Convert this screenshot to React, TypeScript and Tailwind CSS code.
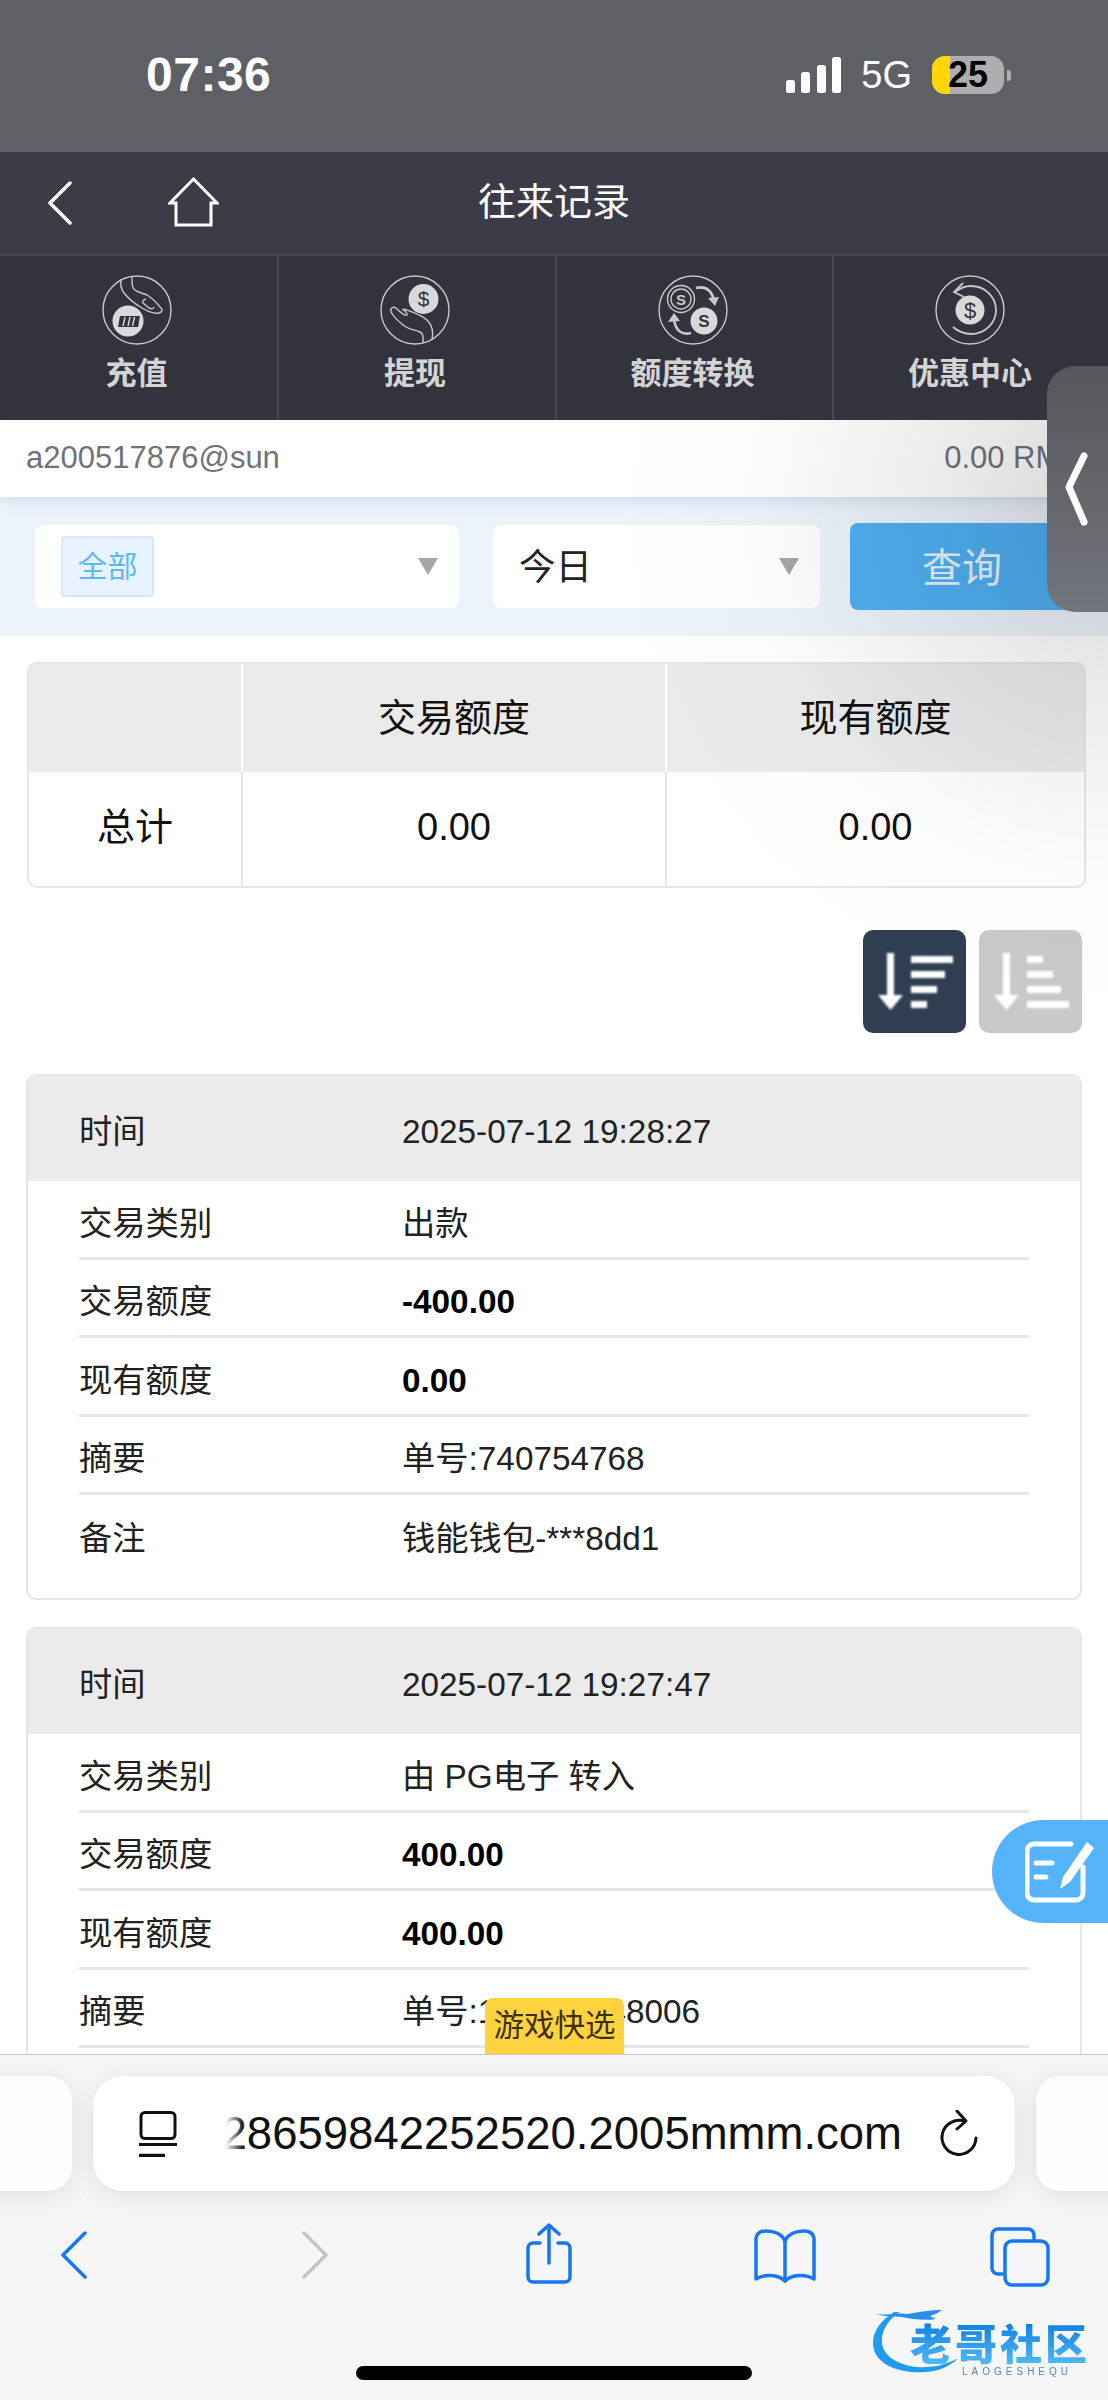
import React from "react";

const FONT = "font-['Liberation_Sans','Noto_Sans_CJK_SC',sans-serif]";

const HandDownIcon = () => (
  <svg viewBox="0 0 70 70" className="w-[70px] h-[70px]" fill="none" stroke="#c9c9c9" strokeWidth="1.4">
    <circle cx="35" cy="35" r="34" />
    <path d="M19 4c-1 6 0 10 3 14 5 6 11 11 18 15 5 3 12 6 17 5 3-1 4-3 2-5-4-5-9-10-14-13-4-2-9-2-12-5-3-2-3-6-3-13" />
    <path d="M44 24c-3 1-4 2-3 4l6 5c2 1 5 1 5-1" />
    <circle cx="26" cy="46" r="15.500" fill="#d9d9d9" stroke="none" />
    <path d="M18 41h20l-2 11H16z" fill="#33333d" stroke="none" />
    <path d="M23 42l-2 9M28 42l-2 9M32.500 42l-2 9" stroke="#d9d9d9" strokeWidth="1.4" />
  </svg>
);

const HandUpIcon = () => (
  <svg viewBox="0 0 70 70" className="w-[70px] h-[70px]" fill="none" stroke="#c9c9c9" strokeWidth="1.4">
    <circle cx="35" cy="35" r="34" />
    <circle cx="43.500" cy="24" r="15" fill="#d9d9d9" stroke="none" />
    <text x="43.500" y="31" textAnchor="middle" fontSize="21" fill="#33333d" stroke="none" fontFamily="Liberation Sans">$</text>
    <path d="M43 68c0-5 1-9-3-11-4-2-9-2-14-5-6-4-12-10-15-15-1-4 2-6 5-4 3 3 6 6 9 7 4 1 2-3-3-6" />
    <path d="M24 34c8 3 16 5 23 11 5 5 7 11 5 20" />
  </svg>
);

const ExchangeIcon = () => (
  <svg viewBox="0 0 70 70" className="w-[70px] h-[70px]" fill="none" stroke="#c9c9c9" strokeWidth="1.4">
    <circle cx="35" cy="35" r="34" />
    <circle cx="23" cy="24" r="13.500" />
    <circle cx="23" cy="24" r="10" />
    <text x="23" y="29.500" textAnchor="middle" fontSize="15" fontWeight="700" fill="#c9c9c9" stroke="none" fontFamily="Liberation Sans">S</text>
    <circle cx="46" cy="46" r="13.500" fill="#d9d9d9" stroke="none" />
    <text x="46" y="52" textAnchor="middle" fontSize="17" fontWeight="700" fill="#33333d" stroke="none" fontFamily="Liberation Sans">S</text>
    <path d="M38 13c8-2 15 1 18 12" strokeWidth="2.600" />
    <path d="M50 23l7 8 4-9z" fill="#c9c9c9" stroke="none" />
    <path d="M33 58c-8 2-15-1-17-13" strokeWidth="2.600" />
    <path d="M10 47l6-9 6 8z" fill="#c9c9c9" stroke="none" />
  </svg>
);

const RebateIcon = () => (
  <svg viewBox="0 0 70 70" className="w-[70px] h-[70px]" fill="none" stroke="#c9c9c9" strokeWidth="1.4">
    <circle cx="35" cy="35" r="34" />
    <circle cx="35" cy="35" r="14.500" fill="#d9d9d9" stroke="none" />
    <text x="35" y="43" textAnchor="middle" fontSize="22" fill="#33333d" stroke="none" fontFamily="Liberation Sans">$</text>
    <path d="M20 17c5-4 10-6 16-6 14 0 25 11 25 24S50 59 36 59c-7 0-12-2-18-7" strokeWidth="1.800" />
    <path d="M28 8l-9 9 10 5" strokeWidth="1.800" />
  </svg>
);

const navItems = [
  { label: "充值", icon: <HandDownIcon /> },
  { label: "提现", icon: <HandUpIcon /> },
  { label: "额度转换", icon: <ExchangeIcon /> },
  { label: "优惠中心", icon: <RebateIcon /> },
];

const records = [
  {
    time: "2025-07-12 19:28:27",
    rows: [
      { label: "交易类别", value: "出款" },
      { label: "交易额度", value: "-400.00", bold: true },
      { label: "现有额度", value: "0.00", bold: true },
      { label: "摘要", value: "单号:740754768" },
      { label: "备注", value: "钱能钱包-***8dd1" },
    ],
  },
  {
    time: "2025-07-12 19:27:47",
    rows: [
      { label: "交易类别", value: "由 PG电子 转入" },
      { label: "交易额度", value: "400.00", bold: true },
      { label: "现有额度", value: "400.00", bold: true },
      { label: "摘要", value: "单号:175228648006" },
      { label: "备注", value: "" },
    ],
  },
];

function SortIcon({ bars }: { bars: number[] }) {
  return (
    <svg viewBox="0 0 103 103" className="w-full h-full blur-[0.8px]" fill="#fff">
      <rect x="24" y="23" width="7" height="46" />
      <path d="M15 65h25l-12.500 15z" />
      {bars.map((w, i) => (
        <rect key={i} x="48" y={26 + i * 15} width={w} height="7" />
      ))}
    </svg>
  );
}

function RecordCard({ record }: { record: (typeof records)[number] }) {
  return (
    <div className="rounded-[10px] border-2 border-[#e6e6e6] overflow-hidden bg-white shrink-0 h-[526px]">
      <div className="h-[105px] bg-[#ebebeb] flex items-center pl-[51px] pt-[6px] text-[33.300px] text-[#222]">
        <span className="w-[323px]">时间</span>
        <span>{record.time}</span>
      </div>
      <div className="px-[51px]">
        {record.rows.map((row, i) => (
          <div
            key={row.label}
            className={`h-[78.500px] flex items-center pt-[10px] text-[33.300px] text-[#222] ${i < record.rows.length - 1 ? "border-b-[3px] border-[#e6e6e6]" : ""}`}
          >
            <span className="w-[323px] shrink-0">{row.label}</span>
            <span className={row.bold ? "font-bold text-black" : ""}>{row.value}</span>
          </div>
        ))}
      </div>
    </div>
  );
}

export default function App() {
  return (
    <div className={`relative w-[1108px] h-[2400px] overflow-hidden bg-white flex flex-col ${FONT}`}>
      {/* status bar */}
      <div className="h-[152px] shrink-0 bg-[#5f6065] flex items-center justify-between pl-[146px] pr-[97px] pb-[2px] text-white">
        <span className="text-[48px] font-bold tracking-[0.5px]">07:36</span>
        <div className="flex items-center">
          <svg width="56" height="36" viewBox="0 0 56 36" fill="#fff">
            <rect x="0" y="23" width="9" height="13" rx="2.500" />
            <rect x="15" y="15" width="9" height="21" rx="2.500" />
            <rect x="31" y="8" width="9" height="28" rx="2.500" />
            <rect x="46" y="0" width="9" height="36" rx="2.500" />
          </svg>
          <span className="text-[38px] ml-[19px] leading-none">5G</span>
          <div className="relative ml-[20px] w-[72px] h-[38px] rounded-[13px] overflow-hidden bg-[#aeaeae] flex items-center justify-center">
            <div className="absolute left-0 top-0 bottom-0 w-[18px] bg-[#ffd60a]" />
            <span className="relative text-black text-[36px] font-bold leading-none">25</span>
          </div>
          <div className="ml-[3px] w-[4px] h-[11px] rounded-r-[3px] bg-[#aeaeae]" />
        </div>
      </div>

      {/* page header */}
      <div className="h-[104px] shrink-0 bg-[#3c3c48] border-b-2 border-[#484855] grid grid-cols-[1fr_auto_1fr] items-center">
        <div className="flex items-center pl-[47px]">
          <svg width="26" height="44" viewBox="0 0 26 44" fill="none" stroke="#fff" strokeWidth="3.500" strokeLinecap="round" strokeLinejoin="round">
            <path d="M23 2 3 22l20 20" />
          </svg>
          <svg className="ml-[95px] mt-[-2px]" width="51" height="50" viewBox="0 0 51 50" fill="none" stroke="#fff" strokeWidth="3">
            <path d="M25.500 2 2 26h6v22h35V26h6z" />
          </svg>
        </div>
        <span className="text-[38px] text-white pb-[2px]">往来记录</span>
        <div />
      </div>

      {/* quick actions */}
      <div className="h-[164px] shrink-0 bg-[#33333d] grid grid-cols-[279px_278px_277px_1fr]">
        {navItems.map((item, i) => (
          <div key={item.label} className={`flex flex-col items-center pt-[19px] ${i < 3 ? "border-r-2 border-[#484855] pr-[4px]" : "pr-[2px]"}`}>
            {item.icon}
            <span className="mt-[7px] text-[31px] font-bold text-[#d4d4d4] leading-[44px]">{item.label}</span>
          </div>
        ))}
      </div>

      {/* account */}
      <div className="h-[77px] shrink-0 bg-white shadow-[0_4px_12px_rgba(90,120,170,0.18)] flex items-center justify-between pl-[26px] pr-[26px] text-[31px] text-[#70737a] relative z-[1] whitespace-nowrap">
        <span>a200517876@sun</span>
        <span>0.00 RMB</span>
      </div>

      {/* filters */}
      <div className="h-[139px] shrink-0 bg-[#edf3fb] flex items-center pl-[35px]">
        <div className="w-[424px] h-[83px] rounded-[8px] bg-white flex items-center justify-between pl-[26px] pr-[21px]">
          <span className="w-[93px] h-[61px] rounded-[4px] bg-[#e8f3ff] border-2 border-[#d3e7fd] text-[#5ab9f8] text-[30px] flex items-center justify-center">全部</span>
          <span className="w-0 h-0 border-x-[10px] border-x-transparent border-t-[17px] border-t-[#a6a6a6]" />
        </div>
        <div className="ml-[34px] w-[327px] h-[83px] rounded-[8px] bg-white flex items-center justify-between pl-[26px] pr-[21px]">
          <span className="text-[36.500px] text-[#222] pt-[3px]">今日</span>
          <span className="w-0 h-0 border-x-[10px] border-x-transparent border-t-[17px] border-t-[#a6a6a6]" />
        </div>
        <div className="ml-[30px] w-[258px] h-[87px] rounded-[8px] bg-[#4fb0f2] flex items-center pl-[72px] pt-[2px] text-[40px] text-[#e6f3fc] shrink-0">查询</div>
      </div>

      {/* page body */}
      <div className="flex-1 min-h-0 overflow-hidden flex flex-col px-[26px] pt-[26px]">
        <div className="shrink-0 ml-[1px] mr-[-4px] rounded-[10px] border-2 border-[#e6e6e6] overflow-hidden">
          <div className="grid grid-cols-[214px_424px_1fr] h-[108px] bg-[#ebebeb] text-[38px] text-[#111] text-center">
            <div className="border-r-2 border-white" />
            <div className="border-r-2 border-white flex items-center justify-center">交易额度</div>
            <div className="flex items-center justify-center">现有额度</div>
          </div>
          <div className="grid grid-cols-[214px_424px_1fr] h-[114px] bg-white text-[38px] text-[#111] text-center">
            <div className="border-r-2 border-[#e6e6e6] flex items-center justify-center pb-[3px]">总计</div>
            <div className="border-r-2 border-[#e6e6e6] flex items-center justify-center pb-[3px]">0.00</div>
            <div className="flex items-center justify-center pb-[3px]">0.00</div>
          </div>
        </div>

        <div className="shrink-0 flex justify-end gap-[13px] mt-[42px]">
          <div className="w-[103px] h-[103px] rounded-[10px] bg-[#2f3e50]">
            <SortIcon bars={[42, 34, 26, 16]} />
          </div>
          <div className="w-[103px] h-[103px] rounded-[10px] bg-[#c9c9c9]">
            <SortIcon bars={[16, 26, 34, 42]} />
          </div>
        </div>

        <div className="flex flex-col gap-[27px] mt-[41px]">
          {records.map((r) => (
            <RecordCard key={r.time} record={r} />
          ))}
        </div>
      </div>

      {/* browser toolbar */}
      <div className="h-[346px] shrink-0 bg-[#f6f6f6] border-t border-[#c8c8c8] flex flex-col relative z-[2]">
        <div className="h-[137px] shrink-0 pt-[21px] flex gap-[21px] ml-[-80px]">
          <div className="w-[152px] h-[115px] shrink-0 rounded-[24px] bg-[#fdfdfd] shadow-[0_4px_24px_rgba(0,0,0,0.10)]" />
          <div className="w-[922px] h-[115px] shrink-0 rounded-[30px] bg-white shadow-[0_4px_24px_rgba(0,0,0,0.10)] flex items-center pl-[45px] pr-[36px]">
            <svg width="40" height="46" viewBox="0 0 40 46" fill="none" stroke="#111" strokeWidth="3" className="shrink-0">
              <rect x="3" y="1.500" width="34" height="26" rx="4" />
              <path d="M1 33.500h38" />
              <path d="M1 44.500h26" strokeWidth="3.500" />
            </svg>
            <div className="relative flex-1 min-w-0 ml-[48px] mr-[37px] overflow-hidden flex justify-end">
              <span className="text-[45.500px] text-[#111] whitespace-nowrap leading-[60px]">28659842252520.2005mmm.com</span>
              <div className="absolute left-0 top-0 bottom-0 w-[18px] bg-gradient-to-r from-white to-transparent" />
            </div>
            <svg width="40" height="48" viewBox="0 0 40 48" fill="none" stroke="#111" strokeWidth="3" strokeLinecap="round" className="shrink-0">
              <path d="M26 11.500A17 17 0 1 0 37 28" />
              <path d="M18 1l9 10-9 8" strokeLinejoin="round" />
            </svg>
          </div>
          <div className="w-[152px] h-[115px] shrink-0 rounded-[24px] bg-[#fdfdfd] shadow-[0_4px_24px_rgba(0,0,0,0.10)]" />
        </div>

        <div className="flex items-start pl-[60px] pt-[39px]">
          <svg width="28" height="48" viewBox="0 0 28 48" fill="none" stroke="#1677f2" strokeWidth="3.500" strokeLinecap="round" strokeLinejoin="round">
            <path d="M25 2 3 24l22 22" />
          </svg>
          <svg className="ml-[213px]" width="28" height="48" viewBox="0 0 28 48" fill="none" stroke="#c4c4c4" strokeWidth="3.500" strokeLinecap="round" strokeLinejoin="round">
            <path d="M3 2l22 22L3 46" />
          </svg>
          <svg className="ml-[196px] mt-[-8px]" width="48" height="62" viewBox="0 0 48 62" fill="none" stroke="#1677f2" strokeWidth="3.500" strokeLinecap="round" strokeLinejoin="round">
            <path d="M24 2v38M14 11 24 2l10 9" />
            <path d="M15 20H8a5 5 0 0 0-5 5v29a5 5 0 0 0 5 5h32a5 5 0 0 0 5-5V25a5 5 0 0 0-5-5h-7" />
          </svg>
          <svg className="ml-[181px] mt-[-2px]" width="62" height="54" viewBox="0 0 62 54" fill="none" stroke="#1677f2" strokeWidth="3.500" strokeLinecap="round" strokeLinejoin="round">
            <path d="M31 12C28 5 20 2 12 2 7 2 3 4 2 9v41c8-5 22-5 29 2 7-7 21-7 29-2V9c-1-5-5-7-10-7-8 0-16 3-19 10z" />
            <path d="M31 12v40" />
          </svg>
          <svg className="ml-[174px] mt-[-4px]" width="60" height="60" viewBox="0 0 60 60" fill="none" stroke="#1677f2" strokeWidth="3.500" strokeLinejoin="round">
            <path d="M13 47H8a6 6 0 0 1-6-6V8a6 6 0 0 1 6-6h30a6 6 0 0 1 6 6v6" />
            <rect x="15" y="14" width="43" height="44" rx="7" />
          </svg>
        </div>
      </div>

      {/* floating bits over the page */}
      <div className="absolute left-[500px] right-0 top-[420px] h-[700px] bg-[radial-gradient(circle_at_608px_98px,rgba(0,0,0,0.16),rgba(0,0,0,0.08)_170px,rgba(0,0,0,0.015)_350px,transparent_500px)] z-[3]" />

      <div className="absolute right-0 top-[366px] w-[61px] h-[246px] rounded-l-[28px] bg-gradient-to-b from-[#56565b] to-[#72757c] flex items-center pl-[17px] z-[4]">
        <svg width="24" height="74" viewBox="0 0 24 74" fill="none" stroke="#fff" strokeWidth="7" strokeLinecap="round" strokeLinejoin="round">
          <path d="M20 4 5 35l15 35" />
        </svg>
      </div>

      <div className="absolute right-0 top-[1820px] w-[116px] h-[103px] rounded-l-[52px] bg-[#55b4f9] flex items-center pl-[33px] z-[4]">
        <svg width="72" height="62" viewBox="0 0 72 62" fill="none" stroke="#fff" strokeWidth="5" strokeLinecap="round">
          <path d="M46 3H9a7 7 0 0 0-7 7v42a7 7 0 0 0 7 7h42a7 7 0 0 0 7-7V26" />
          <path d="M11 22h16M11 36h10" />
          <path d="M62 1 38 36l-3 12 10-7 24-34z" fill="#fff" stroke="none" />
        </svg>
      </div>

      <div className="absolute left-[485px] top-[1998px] w-[139px] h-[56px] rounded-t-[8px] bg-[#ffd23f] flex items-center justify-center text-[30.500px] text-[#3b3000] z-[4]">游戏快选</div>

      {/* watermark */}
      <div className="absolute left-[870px] top-[2300px] w-[225px] h-[78px] z-[4] blur-[0.5px]">
        <svg width="100" height="78" viewBox="0 0 100 78" className="absolute left-0 top-0">
          <path d="M24 12C8 22 0 36 4 50c5 16 28 24 52 22 12-1 24-5 32-14-12 7-26 10-40 9C26 65 10 54 12 38c1-10 8-20 18-26z" fill="#1f9bf0" />
          <path d="M6 14c10 2 22-2 32 0 10-2 24-4 34-4-4 3-8 5-12 6 2 1 3 2 6 3-12 2-24 0-34-2-8-1-18 0-26-3z" fill="#2a8ee8" />
        </svg>
        <span className="absolute left-[40px] top-[22px] text-[42px] leading-[48px] font-black tracking-[3px] whitespace-nowrap bg-gradient-to-b from-[#0a7fe0] to-[#55c0fb] bg-clip-text text-transparent">老哥社区</span>
        <span className="absolute left-[92px] top-[66px] text-[10px] leading-[12px] tracking-[4px] text-[#5a86b8] whitespace-nowrap">LAOGESHEQU</span>
      </div>

      <div className="absolute left-[356px] top-[2366px] w-[396px] h-[14px] rounded-full bg-black z-[4]" />
    </div>
  );
}
